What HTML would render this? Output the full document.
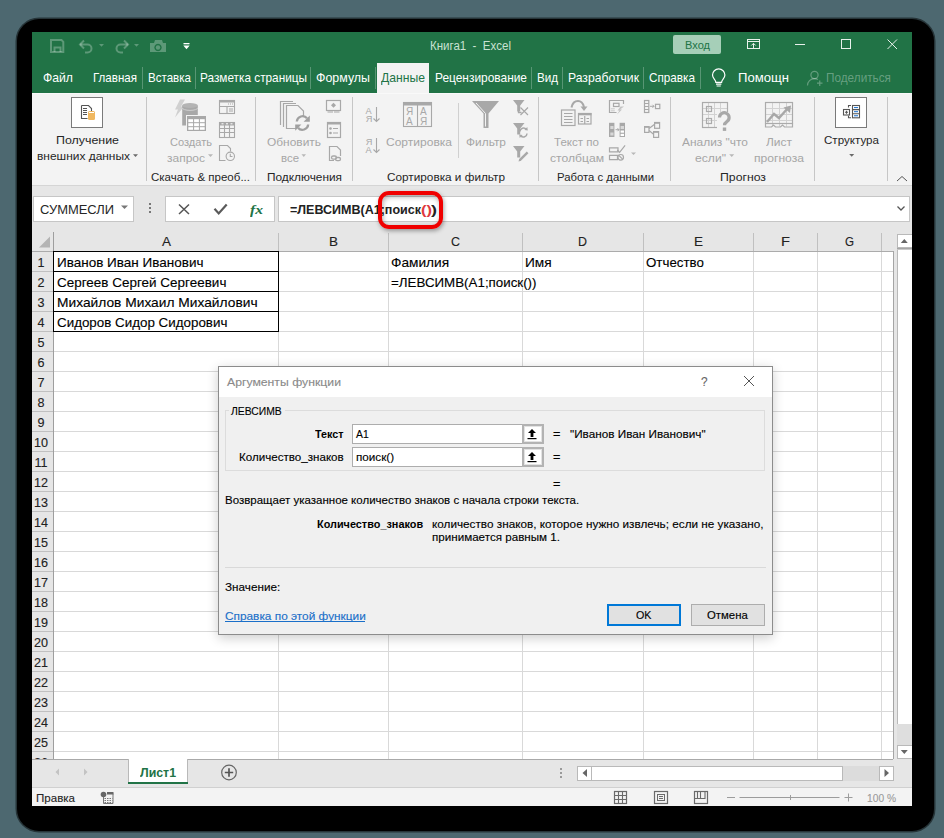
<!DOCTYPE html>
<html><head><meta charset="utf-8"><style>
html,body{margin:0;padding:0;width:944px;height:838px;overflow:hidden;background:#4d6870;font-family:"Liberation Sans",sans-serif}
</style></head><body>
<div style="position:absolute;left:17px;top:19px;width:917px;height:812px;background:#000;border-radius:22px;box-shadow:0 0 0 1.5px rgba(0,0,0,0.5)"></div>
<div style="position:absolute;left:32px;top:32px;width:880px;height:61px;background:#217346"></div>
<div style="position:absolute;left:32px;top:93px;width:880px;height:92px;background:#f3f3f3"></div>
<div style="position:absolute;left:32px;top:93px;width:880px;height:1px;background:#f9f9f9"></div>
<div style="position:absolute;left:32px;top:185px;width:880px;height:1px;background:#d5d5d5"></div>
<div style="position:absolute;left:32px;top:186px;width:880px;height:47px;background:#e6e6e6"></div>
<div style="position:absolute;left:32px;top:232px;width:880px;height:527px;background:#e6e6e6"></div>
<div style="position:absolute;left:32px;top:759px;width:880px;height:28px;background:#e6e6e6"></div>
<div style="position:absolute;left:32px;top:787px;width:880px;height:1px;background:#d0d0d0"></div>
<div style="position:absolute;left:32px;top:788px;width:880px;height:18px;background:#f3f3f3"></div>
<svg style="position:absolute;left:0;top:0" width="944" height="100">
<g fill="none" stroke="rgba(255,255,255,0.27)" stroke-width="2">
<path d="M51 40h10.5l1.8 1.8v10.2h-12.3z"/>
<path d="M54.5 52v-4.5h6v4.5"/>
<path d="M80 44.5h7.5a4 4 0 0 1 0 8h-2.5" />
<path d="M84 40.5l-4 4 4 4"/>
<path d="M128 44.5h-7.5a4 4 0 0 0 0 8h2.5" />
<path d="M124 40.5l4 4-4 4"/>
</g>
<g fill="rgba(255,255,255,0.27)">
<path d="M99 44h5l-2.5 2.7z"/>
<path d="M134 44h5l-2.5 2.7z"/>
<path d="M150 43h4l1-3h7l1 3h3v9h-16z M158 43.8a3.7 3.7 0 1 0 0.01 0z" fill-rule="evenodd"/><circle cx="158" cy="47.5" r="2.2"/>
</g>
<g fill="#fff">
<rect x="183.5" y="43" width="6" height="1.3"/>
<path d="M183.3 45.5h6.4l-3.2 3.7z"/>
</g>
</svg>
<span style="position:absolute;white-space:pre;left:429.50px;top:40.00px;font-family:'Liberation Sans', sans-serif;font-size:12px;font-weight:400;line-height:1;;color:#c9e2d2;transform:scaleX(0.9589);transform-origin:0 0">Книга1  -  Excel</span>
<div style="position:absolute;left:673px;top:35px;width:48px;height:19px;background:#a6cfb8;border-radius:2px"></div>
<span style="position:absolute;white-space:pre;left:684.50px;top:39.00px;font-family:'Liberation Sans', sans-serif;font-size:11.7px;font-weight:400;line-height:1;;color:#217346;transform:scaleX(0.9451);transform-origin:0 0">Вход</span>
<svg style="position:absolute;left:0;top:0" width="944" height="100">
<g fill="none" stroke="#e8f1eb" stroke-width="1">
<rect x="747.5" y="39.5" width="12" height="9"/>
<path d="M747.5 41.5h12"/>
<path d="M753.5 48v-4.5M751.3 45.5l2.2-2.2 2.2 2.2"/>
<path d="M795 44.5h10"/>
<rect x="841.5" y="39.5" width="9" height="9"/>
<path d="M887.5 39.5l9.5 9.5M897 39.5l-9.5 9.5"/>
</g></svg>
<span style="position:absolute;white-space:pre;left:42.50px;top:71.00px;font-family:'Liberation Sans', sans-serif;font-size:13.5px;font-weight:400;line-height:1;;color:#fff;transform:scaleX(0.9035);transform-origin:0 0">Файл</span>
<span style="position:absolute;white-space:pre;left:92.50px;top:71.00px;font-family:'Liberation Sans', sans-serif;font-size:13.5px;font-weight:400;line-height:1;;color:#fff;transform:scaleX(0.8562);transform-origin:0 0">Главная</span>
<span style="position:absolute;white-space:pre;left:147.50px;top:71.00px;font-family:'Liberation Sans', sans-serif;font-size:13.5px;font-weight:400;line-height:1;;color:#fff;transform:scaleX(0.8568);transform-origin:0 0">Вставка</span>
<span style="position:absolute;white-space:pre;left:199.50px;top:71.00px;font-family:'Liberation Sans', sans-serif;font-size:13.5px;font-weight:400;line-height:1;;color:#fff;transform:scaleX(0.8736);transform-origin:0 0">Разметка страницы</span>
<span style="position:absolute;white-space:pre;left:315.50px;top:71.00px;font-family:'Liberation Sans', sans-serif;font-size:13.5px;font-weight:400;line-height:1;;color:#fff;transform:scaleX(0.9191);transform-origin:0 0">Формулы</span>
<span style="position:absolute;white-space:pre;left:434.50px;top:71.00px;font-family:'Liberation Sans', sans-serif;font-size:13.5px;font-weight:400;line-height:1;;color:#fff;transform:scaleX(0.8825);transform-origin:0 0">Рецензирование</span>
<span style="position:absolute;white-space:pre;left:536.50px;top:71.00px;font-family:'Liberation Sans', sans-serif;font-size:13.5px;font-weight:400;line-height:1;;color:#fff;transform:scaleX(0.8593);transform-origin:0 0">Вид</span>
<span style="position:absolute;white-space:pre;left:567.50px;top:71.00px;font-family:'Liberation Sans', sans-serif;font-size:13.5px;font-weight:400;line-height:1;;color:#fff;transform:scaleX(0.9018);transform-origin:0 0">Разработчик</span>
<span style="position:absolute;white-space:pre;left:648.50px;top:71.00px;font-family:'Liberation Sans', sans-serif;font-size:13.5px;font-weight:400;line-height:1;;color:#fff;transform:scaleX(0.8684);transform-origin:0 0">Справка</span>
<span style="position:absolute;white-space:pre;left:737.50px;top:71.00px;font-family:'Liberation Sans', sans-serif;font-size:13.5px;font-weight:400;line-height:1;;color:#fff;transform:scaleX(0.9700);transform-origin:0 0">Помощн</span>
<div style="position:absolute;left:142px;top:67px;width:1px;height:22px;background:rgba(255,255,255,0.25)"></div>
<div style="position:absolute;left:195px;top:67px;width:1px;height:22px;background:rgba(255,255,255,0.25)"></div>
<div style="position:absolute;left:310px;top:67px;width:1px;height:22px;background:rgba(255,255,255,0.25)"></div>
<div style="position:absolute;left:375px;top:67px;width:1px;height:22px;background:rgba(255,255,255,0.25)"></div>
<div style="position:absolute;left:531px;top:67px;width:1px;height:22px;background:rgba(255,255,255,0.25)"></div>
<div style="position:absolute;left:562px;top:67px;width:1px;height:22px;background:rgba(255,255,255,0.25)"></div>
<div style="position:absolute;left:643px;top:67px;width:1px;height:22px;background:rgba(255,255,255,0.25)"></div>
<div style="position:absolute;left:700px;top:67px;width:1px;height:22px;background:rgba(255,255,255,0.25)"></div>
<div style="position:absolute;left:377px;top:63px;width:52px;height:30px;background:#f3f3f3"></div>
<span style="position:absolute;white-space:pre;left:380.50px;top:71.00px;font-family:'Liberation Sans', sans-serif;font-size:13.5px;font-weight:400;line-height:1;;color:#217346;transform:scaleX(0.9020);transform-origin:0 0">Данные</span>
<span style="position:absolute;white-space:pre;left:825.50px;top:71.00px;font-family:'Liberation Sans', sans-serif;font-size:13.5px;font-weight:400;line-height:1;;color:rgba(255,255,255,0.32);transform:scaleX(0.8719);transform-origin:0 0">Поделиться</span>
<svg style="position:absolute;left:0;top:0" width="944" height="100">
<g fill="none" stroke="#fff" stroke-width="1.2">
<path d="M715.8 82.3c0-2.6-3.3-4-3.3-7.2a6.2 6.2 0 0 1 12.4 0c0 3.2-3.3 4.6-3.3 7.2z"/>
<path d="M716 84.2h5.4M716.6 86h4.2"/>
</g>
<g fill="none" stroke="rgba(255,255,255,0.3)" stroke-width="1.2">
<circle cx="814.5" cy="75" r="3.6"/>
<path d="M807.5 85.5c0-4 3-6.8 7-6.8 1.3 0 2.4 0.3 3.4 0.8"/>
<path d="M817 83.2h5.5M819.75 80.5v5.5"/>
</g>
</svg>
<div style="position:absolute;left:146px;top:97px;width:1px;height:84px;background:#c6c6c6"></div>
<div style="position:absolute;left:255px;top:97px;width:1px;height:84px;background:#c6c6c6"></div>
<div style="position:absolute;left:352px;top:97px;width:1px;height:84px;background:#c6c6c6"></div>
<div style="position:absolute;left:538px;top:97px;width:1px;height:84px;background:#c6c6c6"></div>
<div style="position:absolute;left:670px;top:97px;width:1px;height:84px;background:#c6c6c6"></div>
<div style="position:absolute;left:814px;top:97px;width:1px;height:84px;background:#c6c6c6"></div>
<div style="position:absolute;left:887px;top:97px;width:1px;height:84px;background:#c6c6c6"></div>
<div style="position:absolute;left:458px;top:103px;width:1px;height:55px;background:#d0d0d0"></div>
<div style="position:absolute;left:71px;top:97px;width:32px;height:31px;background:#fff;border:1px solid #7a7a7a;box-sizing:border-box"></div>
<span style="position:absolute;white-space:pre;left:55.50px;top:135.00px;font-family:'Liberation Sans', sans-serif;font-size:11.8px;font-weight:400;line-height:1;;color:#262626;transform:scaleX(1.0511);transform-origin:0 0">Получение</span>
<span style="position:absolute;white-space:pre;left:36.50px;top:151.00px;font-family:'Liberation Sans', sans-serif;font-size:11.8px;font-weight:400;line-height:1;;color:#262626;transform:scaleX(1.0114);transform-origin:0 0">внешних данных</span>
<span style="position:absolute;white-space:pre;left:150.50px;top:172.00px;font-family:'Liberation Sans', sans-serif;font-size:11.8px;font-weight:400;line-height:1;;color:#262626;transform:scaleX(0.9770);transform-origin:0 0">Скачать & преоб...</span>
<span style="position:absolute;white-space:pre;left:169.50px;top:137.00px;font-family:'Liberation Sans', sans-serif;font-size:11.8px;font-weight:400;line-height:1;;color:#a6a6a6;transform:scaleX(0.9366);transform-origin:0 0">Создать</span>
<span style="position:absolute;white-space:pre;left:166.50px;top:153.00px;font-family:'Liberation Sans', sans-serif;font-size:11.8px;font-weight:400;line-height:1;;color:#a6a6a6;transform:scaleX(1.0163);transform-origin:0 0">запрос</span>
<span style="position:absolute;white-space:pre;left:266.50px;top:137.00px;font-family:'Liberation Sans', sans-serif;font-size:11.8px;font-weight:400;line-height:1;;color:#a6a6a6;transform:scaleX(1.0108);transform-origin:0 0">Обновить</span>
<span style="position:absolute;white-space:pre;left:280.50px;top:153.00px;font-family:'Liberation Sans', sans-serif;font-size:11.8px;font-weight:400;line-height:1;;color:#a6a6a6;transform:scaleX(0.9673);transform-origin:0 0">все</span>
<span style="position:absolute;white-space:pre;left:266.50px;top:172.00px;font-family:'Liberation Sans', sans-serif;font-size:11.8px;font-weight:400;line-height:1;;color:#262626;transform:scaleX(1.0048);transform-origin:0 0">Подключения</span>
<span style="position:absolute;white-space:pre;left:385.50px;top:137.00px;font-family:'Liberation Sans', sans-serif;font-size:11.8px;font-weight:400;line-height:1;;color:#a6a6a6;transform:scaleX(1.0193);transform-origin:0 0">Сортировка</span>
<span style="position:absolute;white-space:pre;left:465.50px;top:137.00px;font-family:'Liberation Sans', sans-serif;font-size:11.8px;font-weight:400;line-height:1;;color:#a6a6a6;transform:scaleX(1.0091);transform-origin:0 0">Фильтр</span>
<span style="position:absolute;white-space:pre;left:386.50px;top:172.00px;font-family:'Liberation Sans', sans-serif;font-size:11.8px;font-weight:400;line-height:1;;color:#262626;transform:scaleX(0.9978);transform-origin:0 0">Сортировка и фильтр</span>
<span style="position:absolute;white-space:pre;left:553.50px;top:137.00px;font-family:'Liberation Sans', sans-serif;font-size:11.8px;font-weight:400;line-height:1;;color:#a6a6a6;transform:scaleX(0.9796);transform-origin:0 0">Текст по</span>
<span style="position:absolute;white-space:pre;left:549.50px;top:153.00px;font-family:'Liberation Sans', sans-serif;font-size:11.8px;font-weight:400;line-height:1;;color:#a6a6a6;transform:scaleX(1.0277);transform-origin:0 0">столбцам</span>
<span style="position:absolute;white-space:pre;left:556.50px;top:172.00px;font-family:'Liberation Sans', sans-serif;font-size:11.8px;font-weight:400;line-height:1;;color:#262626;transform:scaleX(0.9600);transform-origin:0 0">Работа с данными</span>
<span style="position:absolute;white-space:pre;left:681.50px;top:137.00px;font-family:'Liberation Sans', sans-serif;font-size:11.8px;font-weight:400;line-height:1;;color:#a6a6a6;transform:scaleX(1.0110);transform-origin:0 0">Анализ "что</span>
<span style="position:absolute;white-space:pre;left:694.50px;top:153.00px;font-family:'Liberation Sans', sans-serif;font-size:11.8px;font-weight:400;line-height:1;;color:#a6a6a6;transform:scaleX(1.0290);transform-origin:0 0">если"</span>
<span style="position:absolute;white-space:pre;left:765.50px;top:137.00px;font-family:'Liberation Sans', sans-serif;font-size:11.8px;font-weight:400;line-height:1;;color:#a6a6a6;transform:scaleX(1.0140);transform-origin:0 0">Лист</span>
<span style="position:absolute;white-space:pre;left:753.50px;top:153.00px;font-family:'Liberation Sans', sans-serif;font-size:11.8px;font-weight:400;line-height:1;;color:#a6a6a6;transform:scaleX(1.0260);transform-origin:0 0">прогноза</span>
<span style="position:absolute;white-space:pre;left:719.50px;top:172.00px;font-family:'Liberation Sans', sans-serif;font-size:11.8px;font-weight:400;line-height:1;;color:#262626;transform:scaleX(1.0392);transform-origin:0 0">Прогноз</span>
<div style="position:absolute;left:835px;top:97px;width:32px;height:31px;background:#fff;border:1px solid #7a7a7a;box-sizing:border-box"></div>
<span style="position:absolute;white-space:pre;left:823.50px;top:135.00px;font-family:'Liberation Sans', sans-serif;font-size:11.8px;font-weight:400;line-height:1;;color:#262626;transform:scaleX(0.9827);transform-origin:0 0">Структура</span>
<svg style="position:absolute;left:0;top:0" width="944" height="200">
<!-- dropdown arrows -->
<g fill="#6a6a6a"><path d="M133 154.3h5l-2.5 2.6z"/><path d="M849.2 154h5l-2.5 2.8z"/></g>
<g fill="#b8b8b8"><path d="M208 154.3h5l-2.5 2.6z"/><path d="M301.5 154.3h4.5l-2.25 2.6z"/><path d="M729.2 154.3h5l-2.5 2.6z"/><path d="M631 152.5h5l-2.5 2.6z"/></g>
<!-- get external data icon -->
<g fill="none" stroke="#555" stroke-width="1.1"><path d="M81.5 105.5h7l3 3v3M81.5 105.5v13h6"/><path d="M83 108.5h4M83 110.5h4M83 112.5h4M83 114.5h4"/></g>
<g fill="#f0b860"><rect x="88" y="111" width="7" height="9" rx="1.5"/></g>
<g fill="#fff"><rect x="89" y="112" width="5" height="1"/></g>
<!-- create query -->
<path d="M180 99.5h5l-4 7h3l-9 11 3-8h-3z" fill="#d0d0d0"/>
<rect x="182.2" y="105.5" width="15.6" height="20" fill="#a8a8a8"/>
<ellipse cx="190" cy="105.5" rx="7.8" ry="2.6" fill="#b4b4b4"/>
<path d="M182.2 107.8a7.8 2.6 0 0 0 15.6 0" fill="none" stroke="#d8d8d8" stroke-width="0.8"/>
<rect x="186" y="115" width="21" height="17" fill="#f3f3f3"/>
<rect x="187" y="116" width="19" height="15" fill="#a8a8a8"/>
<g fill="#fff"><rect x="188.3" y="119.2" width="4.8" height="3"/><rect x="194.1" y="119.2" width="4.8" height="3"/><rect x="199.9" y="119.2" width="4.8" height="3"/>
<rect x="188.3" y="123.2" width="4.8" height="3"/><rect x="194.1" y="123.2" width="4.8" height="3"/><rect x="199.9" y="123.2" width="4.8" height="3"/>
<rect x="188.3" y="127.2" width="4.8" height="2.6"/><rect x="194.1" y="127.2" width="4.8" height="2.6"/><rect x="199.9" y="127.2" width="4.8" height="2.6"/></g>
<g fill="none" stroke="#a8a8a8" stroke-width="1.1">
<rect x="219.5" y="100.5" width="15" height="13"/><path d="M219.5 106.5h15M227 106.5v7M229 109h4M229 111h4"/>
<rect x="219.5" y="122.5" width="15" height="15"/><path d="M219.5 128.5h15M219.5 132.5h15M224.5 125v12.5M229.5 125v12.5"/>
<path d="M225.5 160.5h-6v-15h8l3 3v3"/><circle cx="230.3" cy="156.3" r="4.2"/><path d="M230.3 153.8v2.7h2.2"/>
</g>
<g fill="#a8a8a8"><rect x="219.5" y="100" width="15.5" height="2.5"/><rect x="219.5" y="122" width="15.5" height="3.5"/>
<rect x="228" y="103.5" width="1" height="1"/><rect x="230" y="103.5" width="1" height="1"/><rect x="232" y="103.5" width="1" height="1"/></g>
<g fill="#fff"><rect x="221.5" y="123.3" width="2" height="1"/><rect x="226" y="123.3" width="2" height="1"/><rect x="230.5" y="123.3" width="2" height="1"/></g>
<!-- refresh all -->
<g fill="none" stroke="#a8a8a8" stroke-width="1.2">
<path d="M280.5 125v-23.5h12.5"/><path d="M283.5 127v-23.5h12.5"/>
<path d="M296 128.5h-9.5v-23h11.5l5.5 5.5v5"/>
<rect x="326.5" y="100.5" width="14" height="10"/><path d="M327.5 112h5.5M334 112h5.5"/>
<rect x="327.5" y="122.5" width="13" height="15"/>
<path d="M334 160.5h-4.5v-14h7.5l3.5 3.5v6"/>
<rect x="331.5" y="156" width="5" height="3.2" rx="1.6" stroke-width="1.3"/><rect x="335.5" y="157.5" width="5" height="3.2" rx="1.6" stroke-width="1.3"/>
</g>
<path d="M290 125.5h7.5v-9" fill="#f3f3f3" stroke="none"/>
<g fill="none" stroke="#a0a0a0" stroke-width="2.3">
<path d="M296.8 121.5a5.8 5.8 0 0 1 10.2-3.2"/><path d="M308.2 124.5a5.8 5.8 0 0 1-10.2 3.2"/>
</g>
<g fill="#a0a0a0"><path d="M309.8 115.5v6.2h-6.2z"/><path d="M295.2 130.7v-6.2h6.2z"/></g>
<g fill="#a8a8a8"><rect x="327.5" y="122" width="13.5" height="2.5"/>
<path d="M333.5 102.8l2.5 2.5-2.5 2.5-2.5-2.5z"/><circle cx="330.5" cy="128.5" r="1.3"/><rect x="333" y="128" width="5" height="1"/><circle cx="330.5" cy="133" r="1.3"/><rect x="333" y="132.5" width="5" height="1"/></g>
<!-- sort -->
<g font-family="Liberation Sans" font-size="9.2" fill="#a8a8a8">
<text x="365.5" y="113.8">A</text><text x="365.8" y="122.3">Я</text>
<text x="365.8" y="144.5">Я</text><text x="365.5" y="153">A</text>
</g>
<g fill="none" stroke="#a8a8a8" stroke-width="1.1"><path d="M376.5 107v14.5M373.5 118.5l3 3 3-3M376.5 138v14.5M373.5 149.5l3 3 3-3"/>
<rect x="403.5" y="102.5" width="28" height="24"/><path d="M417.5 104v22.5"/></g>
<rect x="403" y="102" width="29" height="3.5" fill="#a8a8a8"/>
<g font-family="Liberation Sans" font-size="10" fill="#a8a8a8">
<text x="406" y="115">Я</text><text x="420" y="115">A</text><text x="406" y="125">A</text><text x="420" y="125">Я</text>
</g>
<!-- filter -->
<path d="M472 101h27l-10.5 12.5v14.5h-5v-14.5z" fill="#a8a8a8"/>
<path d="M476 103l9.5 10.5v13" stroke="#f3f3f3" stroke-width="1" fill="none"/>
<g fill="#a8a8a8"><path d="M513 100h11.5l-4.3 5.5v6h-3v-6z"/><path d="M513 123h11.5l-4.3 5.5v6h-3v-6z"/><path d="M513 146h11.5l-4.3 5.5v6h-3v-6z"/></g>
<g fill="none" stroke="#a8a8a8" stroke-width="1.3"><path d="M518.5 110.5v2h3"/><path d="M520.5 107.5l7.5 7.5M528 107.5l-7.5 7.5" stroke-width="1.2"/>
<path d="M520 131.5a3.6 3.6 0 0 1 6.3-2.3M527 133.5a3.6 3.6 0 0 1-6.3 2.3" stroke-width="1.5"/>
<path d="M519.8 160.2l7.8-7.8" stroke-width="2.4"/></g>
<g fill="#a8a8a8"><path d="M527.3 127l0.5 3.5-3.5-0.5z"/><path d="M519.7 138l-0.5-3.5 3.5 0.5z"/><path d="M518.5 161.5l0.8-2.8 2 2z"/></g>
<!-- text to columns -->
<g fill="none" stroke="#a8a8a8" stroke-width="1.2">
<rect x="561.5" y="110" width="13.5" height="15.5"/><path d="M564 113.5h8.5M564 116.5h8.5M564 119.5h8.5M564 122.5h8.5"/>
<rect x="578.5" y="113.5" width="12.5" height="10.5"/><path d="M584.75 116v8M580.5 118.5h2.5M586.5 118.5h2.5M580.5 121.5h2.5M586.5 121.5h2.5"/>
<path d="M571.5 107.5c1-5 4-6.5 6.5-6.5s5 2 6 6" stroke-width="2"/>
</g>
<g fill="none" stroke="#a8a8a8" stroke-width="1.2">
<path d="M623.5 104v-3.5h-14v12h7"/>
<rect x="613.5" y="103.3" width="5.5" height="3.2"/>
<path d="M609.5 147.9h8.5v4h-8.5z"/><path d="M609.5 155.4h8v4.2h-8z"/><path d="M617.3 150l2.3 2.3 5.5-7"/><circle cx="620.7" cy="157.3" r="2.8"/><path d="M618.8 155.4l3.8 3.8"/>
<rect x="644.5" y="100.5" width="4.3" height="12"/><path d="M644.5 103.5h4.3M644.5 106.5h4.3M644.5 109.5h4.3"/><rect x="655.5" y="104.3" width="4.3" height="4.3"/>
<rect x="644.6" y="126.6" width="4.4" height="5.8"/><rect x="654.6" y="122.5" width="5" height="5.8"/><rect x="653.6" y="131.6" width="5" height="5.8"/><path d="M649 128.5l5.3-4M649 130.5l4.3 3.5"/>
</g>
<g fill="#a8a8a8">
<path d="M624 106.5h-3.5l-3 4h2l-2.5 4 5-5h-2z" fill="#c4c4c4"/>
<rect x="609" y="122.8" width="5.4" height="14.2"/><rect x="619.6" y="122.8" width="5.4" height="14.2"/>
<path d="M650 106.3h4M652.5 104.8l1.5 1.5-1.5 1.5" stroke="#a8a8a8" stroke-width="1" fill="none"/>
<path d="M615.5 129.7h3.5M617.5 128.2l1.5 1.5-1.5 1.5" stroke="#a8a8a8" stroke-width="1" fill="none"/>
<rect x="644" y="126" width="5.4" height="1.8"/><rect x="654" y="122" width="6" height="1.8"/><rect x="653" y="131" width="6" height="1.8"/>
</g>
<g fill="#d8d8d8"><rect x="610.3" y="126" width="3.2" height="3"/><rect x="610.3" y="132.5" width="3.2" height="3"/><rect x="620.6" y="126" width="3.4" height="3"/></g>
<g fill="#fff"><rect x="620.6" y="130.5" width="3.4" height="2.2"/><rect x="620.6" y="133.8" width="3.4" height="2.2"/></g>
<g fill="#c8c8c8"><rect x="610.8" y="108.3" width="4" height="1"/><rect x="610.8" y="110.3" width="4" height="1"/></g>
<path d="M584 111l3.5-4.5h-7z" fill="#a8a8a8"/><rect x="578" y="113" width="13.5" height="2.3" fill="#a8a8a8"/>
<!-- what-if -->
<g fill="none" stroke="#d2d2d2" stroke-width="1">
<path d="M702.5 108.5h25M702.5 114.5h25M702.5 120.5h25M708.5 102.5v25M714.5 102.5v25M720.5 102.5v25"/>
<path d="M765.5 108.5h27M765.5 114.5h27M765.5 120.5h27M772.5 102.5v24M779.5 102.5v24M786.5 102.5v24"/>
</g>
<g fill="none" stroke="#ababab" stroke-width="1.2">
<rect x="702.5" y="102.5" width="25" height="25"/><rect x="765.5" y="102.5" width="27" height="21"/>
<rect x="706.5" y="106.5" width="5" height="5"/><rect x="706.5" y="118.5" width="5" height="5"/>
<path d="M765.5 123.5v3.5h6l2-2 2 2h5l2-2 2 2h8v-3.5"/>
</g>
<path d="M717 112h14v20h-14z" fill="#f3f3f3"/>
<path d="M719.5 117.5a4.8 4.8 0 1 1 7.5 4c-1.5 1-2.5 1.6-2.5 3.8" fill="none" stroke="#a8a8a8" stroke-width="3.2"/>
<rect x="722.8" y="127.5" width="3.4" height="3.4" fill="#a8a8a8"/>
<path d="M767 122l7-8 5 4 9-10" fill="none" stroke="#a8a8a8" stroke-width="2.4"/>
<path d="M791 105.5l-1 7.5-6.5-5.5z" fill="#a8a8a8"/>
<!-- structure -->
<g fill="none" stroke="#555" stroke-width="1.1">
<rect x="843.5" y="109.5" width="6" height="5.5"/><path d="M846.5 110.8v3M845 112.25h3"/>
<path d="M851 105.5h-2.5v2M851 117.8h-2.5v-2"/>
<rect x="852.5" y="105.5" width="7" height="12.3"/><path d="M852.5 109.6h7M852.5 113.7h7"/>
</g>
<g fill="#2b7cd3"><rect x="854" y="107" width="4" height="1.1"/><rect x="854" y="111.1" width="4" height="1.1"/><rect x="854" y="115.2" width="4" height="1.1"/></g>
<path d="M897 181l5-4.5 5 4.5" fill="none" stroke="#555" stroke-width="1"/>
</svg>
<div style="position:absolute;left:33px;top:196px;width:101px;height:26px;background:#fff;border:1px solid #c6c6c6;box-sizing:border-box"></div>
<span style="position:absolute;white-space:pre;left:39.50px;top:204.00px;font-family:'Liberation Sans', sans-serif;font-size:12px;font-weight:400;line-height:1;;color:#262626;transform:scaleX(1.0778);transform-origin:0 0">СУММЕСЛИ</span>
<div style="position:absolute;left:165px;top:196px;width:110px;height:26px;background:#fff;border:1px solid #c6c6c6;box-sizing:border-box"></div>
<div style="position:absolute;left:278px;top:196px;width:632px;height:26px;background:#fff;border:1px solid #c6c6c6;box-sizing:border-box"></div>
<svg style="position:absolute;left:0;top:0" width="944" height="240">
<g fill="#777"><path d="M121 205.5h7l-3.5 3.5z"/><rect x="149" y="203" width="2" height="2"/><rect x="149" y="207" width="2" height="2"/><rect x="149" y="211" width="2" height="2"/></g>
<g fill="none" stroke="#555" stroke-width="1.5"><path d="M179 204.5l10 9.5M189 204.5l-10 9.5"/></g><path d="M214.5 208.8l4.2 4.6 8-9" fill="none" stroke="#5a5a5a" stroke-width="2.2"/>
<path d="M897.5 206.5l3.5 3.5 3.5-3.5" fill="none" stroke="#555" stroke-width="1.3"/>
</svg>
<span style="position:absolute;white-space:pre;left:249.50px;top:203.00px;font-family:'Liberation Sans', sans-serif;font-size:13px;font-weight:700;line-height:1;font-family:'Liberation Serif',serif;font-style:italic;color:#217346;transform:scaleX(1.1988);transform-origin:0 0">fx</span>
<span style="position:absolute;white-space:pre;left:289.50px;top:204.00px;font-family:'Liberation Sans', sans-serif;font-size:12.5px;font-weight:700;line-height:1;;color:#222;transform:scaleX(1.0016);transform-origin:0 0">=ЛЕВСИМВ(А1;поиск</span>
<span style="position:absolute;white-space:pre;left:420.50px;top:204.00px;font-family:'Liberation Sans', sans-serif;font-size:12.5px;font-weight:700;line-height:1;;color:#e0393e;transform:scaleX(1.3208);transform-origin:0 0">()</span>
<span style="position:absolute;white-space:pre;left:430.50px;top:204.00px;font-family:'Liberation Sans', sans-serif;font-size:12.5px;font-weight:700;line-height:1;;color:#222;transform:scaleX(1.4382);transform-origin:0 0">)</span>
<div style="position:absolute;left:53px;top:252px;width:840px;height:507px;background:#fff"></div>
<div style="position:absolute;left:32px;top:251px;width:861px;height:1px;background:#ababab"></div>
<div style="position:absolute;left:53px;top:232px;width:1px;height:527px;background:#9e9e9e"></div>
<div style="position:absolute;left:278px;top:233px;width:1px;height:18px;background:#c0c0c0"></div>
<div style="position:absolute;left:278px;top:252px;width:1px;height:507px;background:#d9d9d9"></div>
<div style="position:absolute;left:388px;top:233px;width:1px;height:18px;background:#c0c0c0"></div>
<div style="position:absolute;left:388px;top:252px;width:1px;height:507px;background:#d9d9d9"></div>
<div style="position:absolute;left:522px;top:233px;width:1px;height:18px;background:#c0c0c0"></div>
<div style="position:absolute;left:522px;top:252px;width:1px;height:507px;background:#d9d9d9"></div>
<div style="position:absolute;left:643px;top:233px;width:1px;height:18px;background:#c0c0c0"></div>
<div style="position:absolute;left:643px;top:252px;width:1px;height:507px;background:#d9d9d9"></div>
<div style="position:absolute;left:753px;top:233px;width:1px;height:18px;background:#c0c0c0"></div>
<div style="position:absolute;left:753px;top:252px;width:1px;height:507px;background:#d9d9d9"></div>
<div style="position:absolute;left:817px;top:233px;width:1px;height:18px;background:#c0c0c0"></div>
<div style="position:absolute;left:817px;top:252px;width:1px;height:507px;background:#d9d9d9"></div>
<div style="position:absolute;left:881px;top:233px;width:1px;height:18px;background:#c0c0c0"></div>
<div style="position:absolute;left:881px;top:252px;width:1px;height:507px;background:#d9d9d9"></div>
<div style="position:absolute;left:32px;top:271px;width:21px;height:1px;background:#c0c0c0"></div>
<div style="position:absolute;left:54px;top:271px;width:839px;height:1px;background:#d9d9d9"></div>
<div style="position:absolute;left:32px;top:291px;width:21px;height:1px;background:#c0c0c0"></div>
<div style="position:absolute;left:54px;top:291px;width:839px;height:1px;background:#d9d9d9"></div>
<div style="position:absolute;left:32px;top:311px;width:21px;height:1px;background:#c0c0c0"></div>
<div style="position:absolute;left:54px;top:311px;width:839px;height:1px;background:#d9d9d9"></div>
<div style="position:absolute;left:32px;top:331px;width:21px;height:1px;background:#c0c0c0"></div>
<div style="position:absolute;left:54px;top:331px;width:839px;height:1px;background:#d9d9d9"></div>
<div style="position:absolute;left:32px;top:351px;width:21px;height:1px;background:#c0c0c0"></div>
<div style="position:absolute;left:54px;top:351px;width:839px;height:1px;background:#d9d9d9"></div>
<div style="position:absolute;left:32px;top:371px;width:21px;height:1px;background:#c0c0c0"></div>
<div style="position:absolute;left:54px;top:371px;width:839px;height:1px;background:#d9d9d9"></div>
<div style="position:absolute;left:32px;top:391px;width:21px;height:1px;background:#c0c0c0"></div>
<div style="position:absolute;left:54px;top:391px;width:839px;height:1px;background:#d9d9d9"></div>
<div style="position:absolute;left:32px;top:411px;width:21px;height:1px;background:#c0c0c0"></div>
<div style="position:absolute;left:54px;top:411px;width:839px;height:1px;background:#d9d9d9"></div>
<div style="position:absolute;left:32px;top:431px;width:21px;height:1px;background:#c0c0c0"></div>
<div style="position:absolute;left:54px;top:431px;width:839px;height:1px;background:#d9d9d9"></div>
<div style="position:absolute;left:32px;top:451px;width:21px;height:1px;background:#c0c0c0"></div>
<div style="position:absolute;left:54px;top:451px;width:839px;height:1px;background:#d9d9d9"></div>
<div style="position:absolute;left:32px;top:471px;width:21px;height:1px;background:#c0c0c0"></div>
<div style="position:absolute;left:54px;top:471px;width:839px;height:1px;background:#d9d9d9"></div>
<div style="position:absolute;left:32px;top:491px;width:21px;height:1px;background:#c0c0c0"></div>
<div style="position:absolute;left:54px;top:491px;width:839px;height:1px;background:#d9d9d9"></div>
<div style="position:absolute;left:32px;top:511px;width:21px;height:1px;background:#c0c0c0"></div>
<div style="position:absolute;left:54px;top:511px;width:839px;height:1px;background:#d9d9d9"></div>
<div style="position:absolute;left:32px;top:531px;width:21px;height:1px;background:#c0c0c0"></div>
<div style="position:absolute;left:54px;top:531px;width:839px;height:1px;background:#d9d9d9"></div>
<div style="position:absolute;left:32px;top:551px;width:21px;height:1px;background:#c0c0c0"></div>
<div style="position:absolute;left:54px;top:551px;width:839px;height:1px;background:#d9d9d9"></div>
<div style="position:absolute;left:32px;top:571px;width:21px;height:1px;background:#c0c0c0"></div>
<div style="position:absolute;left:54px;top:571px;width:839px;height:1px;background:#d9d9d9"></div>
<div style="position:absolute;left:32px;top:591px;width:21px;height:1px;background:#c0c0c0"></div>
<div style="position:absolute;left:54px;top:591px;width:839px;height:1px;background:#d9d9d9"></div>
<div style="position:absolute;left:32px;top:611px;width:21px;height:1px;background:#c0c0c0"></div>
<div style="position:absolute;left:54px;top:611px;width:839px;height:1px;background:#d9d9d9"></div>
<div style="position:absolute;left:32px;top:631px;width:21px;height:1px;background:#c0c0c0"></div>
<div style="position:absolute;left:54px;top:631px;width:839px;height:1px;background:#d9d9d9"></div>
<div style="position:absolute;left:32px;top:651px;width:21px;height:1px;background:#c0c0c0"></div>
<div style="position:absolute;left:54px;top:651px;width:839px;height:1px;background:#d9d9d9"></div>
<div style="position:absolute;left:32px;top:671px;width:21px;height:1px;background:#c0c0c0"></div>
<div style="position:absolute;left:54px;top:671px;width:839px;height:1px;background:#d9d9d9"></div>
<div style="position:absolute;left:32px;top:691px;width:21px;height:1px;background:#c0c0c0"></div>
<div style="position:absolute;left:54px;top:691px;width:839px;height:1px;background:#d9d9d9"></div>
<div style="position:absolute;left:32px;top:711px;width:21px;height:1px;background:#c0c0c0"></div>
<div style="position:absolute;left:54px;top:711px;width:839px;height:1px;background:#d9d9d9"></div>
<div style="position:absolute;left:32px;top:731px;width:21px;height:1px;background:#c0c0c0"></div>
<div style="position:absolute;left:54px;top:731px;width:839px;height:1px;background:#d9d9d9"></div>
<div style="position:absolute;left:32px;top:751px;width:21px;height:1px;background:#c0c0c0"></div>
<div style="position:absolute;left:54px;top:751px;width:839px;height:1px;background:#d9d9d9"></div>
<div style="position:absolute;left:893px;top:251px;width:1px;height:508px;background:#a5a5a5"></div>
<svg style="position:absolute;left:0;top:0" width="100" height="260"><path d="M39 247.5h11v-11z" fill="#b4b4b4"/></svg>
<span style="position:absolute;white-space:pre;left:161.50px;top:236.00px;font-family:'Liberation Sans', sans-serif;font-size:12.6px;font-weight:400;line-height:1;-webkit-text-stroke:0.12px currentColor;;color:#222;transform:scaleX(1.0706);transform-origin:0 0">A</span>
<span style="position:absolute;white-space:pre;left:328.50px;top:236.00px;font-family:'Liberation Sans', sans-serif;font-size:12.6px;font-weight:400;line-height:1;-webkit-text-stroke:0.12px currentColor;;color:#222;transform:scaleX(1.0706);transform-origin:0 0">B</span>
<span style="position:absolute;white-space:pre;left:451.00px;top:236.00px;font-family:'Liberation Sans', sans-serif;font-size:12.6px;font-weight:400;line-height:1;-webkit-text-stroke:0.12px currentColor;;color:#222;transform:scaleX(0.9880);transform-origin:0 0">C</span>
<span style="position:absolute;white-space:pre;left:578.00px;top:236.00px;font-family:'Liberation Sans', sans-serif;font-size:12.6px;font-weight:400;line-height:1;-webkit-text-stroke:0.12px currentColor;;color:#222;transform:scaleX(0.9880);transform-origin:0 0">D</span>
<span style="position:absolute;white-space:pre;left:693.50px;top:236.00px;font-family:'Liberation Sans', sans-serif;font-size:12.6px;font-weight:400;line-height:1;-webkit-text-stroke:0.12px currentColor;;color:#222;transform:scaleX(1.0706);transform-origin:0 0">E</span>
<span style="position:absolute;white-space:pre;left:780.50px;top:236.00px;font-family:'Liberation Sans', sans-serif;font-size:12.6px;font-weight:400;line-height:1;-webkit-text-stroke:0.12px currentColor;;color:#222;transform:scaleX(1.1684);transform-origin:0 0">F</span>
<span style="position:absolute;white-space:pre;left:845.00px;top:236.00px;font-family:'Liberation Sans', sans-serif;font-size:12.6px;font-weight:400;line-height:1;-webkit-text-stroke:0.12px currentColor;;color:#222;transform:scaleX(0.9187);transform-origin:0 0">G</span>
<span style="position:absolute;white-space:pre;left:37.49px;top:257.00px;font-family:'Liberation Sans', sans-serif;font-size:12.6px;font-weight:400;line-height:1;-webkit-text-stroke:0.12px currentColor;;color:#222;transform:scaleX(1.0000);transform-origin:0 0">1</span>
<span style="position:absolute;white-space:pre;left:37.49px;top:277.00px;font-family:'Liberation Sans', sans-serif;font-size:12.6px;font-weight:400;line-height:1;-webkit-text-stroke:0.12px currentColor;;color:#222;transform:scaleX(1.0000);transform-origin:0 0">2</span>
<span style="position:absolute;white-space:pre;left:37.49px;top:297.00px;font-family:'Liberation Sans', sans-serif;font-size:12.6px;font-weight:400;line-height:1;-webkit-text-stroke:0.12px currentColor;;color:#222;transform:scaleX(1.0000);transform-origin:0 0">3</span>
<span style="position:absolute;white-space:pre;left:37.49px;top:317.00px;font-family:'Liberation Sans', sans-serif;font-size:12.6px;font-weight:400;line-height:1;-webkit-text-stroke:0.12px currentColor;;color:#222;transform:scaleX(1.0000);transform-origin:0 0">4</span>
<span style="position:absolute;white-space:pre;left:37.49px;top:337.00px;font-family:'Liberation Sans', sans-serif;font-size:12.6px;font-weight:400;line-height:1;-webkit-text-stroke:0.12px currentColor;;color:#222;transform:scaleX(1.0000);transform-origin:0 0">5</span>
<span style="position:absolute;white-space:pre;left:37.49px;top:357.00px;font-family:'Liberation Sans', sans-serif;font-size:12.6px;font-weight:400;line-height:1;-webkit-text-stroke:0.12px currentColor;;color:#222;transform:scaleX(1.0000);transform-origin:0 0">6</span>
<span style="position:absolute;white-space:pre;left:37.49px;top:377.00px;font-family:'Liberation Sans', sans-serif;font-size:12.6px;font-weight:400;line-height:1;-webkit-text-stroke:0.12px currentColor;;color:#222;transform:scaleX(1.0000);transform-origin:0 0">7</span>
<span style="position:absolute;white-space:pre;left:37.49px;top:397.00px;font-family:'Liberation Sans', sans-serif;font-size:12.6px;font-weight:400;line-height:1;-webkit-text-stroke:0.12px currentColor;;color:#222;transform:scaleX(1.0000);transform-origin:0 0">8</span>
<span style="position:absolute;white-space:pre;left:37.49px;top:417.00px;font-family:'Liberation Sans', sans-serif;font-size:12.6px;font-weight:400;line-height:1;-webkit-text-stroke:0.12px currentColor;;color:#222;transform:scaleX(1.0000);transform-origin:0 0">9</span>
<span style="position:absolute;white-space:pre;left:33.99px;top:437.00px;font-family:'Liberation Sans', sans-serif;font-size:12.6px;font-weight:400;line-height:1;-webkit-text-stroke:0.12px currentColor;;color:#222;transform:scaleX(1.0000);transform-origin:0 0">10</span>
<span style="position:absolute;white-space:pre;left:34.46px;top:457.00px;font-family:'Liberation Sans', sans-serif;font-size:12.6px;font-weight:400;line-height:1;-webkit-text-stroke:0.12px currentColor;;color:#222;transform:scaleX(1.0000);transform-origin:0 0">11</span>
<span style="position:absolute;white-space:pre;left:33.99px;top:477.00px;font-family:'Liberation Sans', sans-serif;font-size:12.6px;font-weight:400;line-height:1;-webkit-text-stroke:0.12px currentColor;;color:#222;transform:scaleX(1.0000);transform-origin:0 0">12</span>
<span style="position:absolute;white-space:pre;left:33.99px;top:497.00px;font-family:'Liberation Sans', sans-serif;font-size:12.6px;font-weight:400;line-height:1;-webkit-text-stroke:0.12px currentColor;;color:#222;transform:scaleX(1.0000);transform-origin:0 0">13</span>
<span style="position:absolute;white-space:pre;left:33.99px;top:517.00px;font-family:'Liberation Sans', sans-serif;font-size:12.6px;font-weight:400;line-height:1;-webkit-text-stroke:0.12px currentColor;;color:#222;transform:scaleX(1.0000);transform-origin:0 0">14</span>
<span style="position:absolute;white-space:pre;left:33.99px;top:537.00px;font-family:'Liberation Sans', sans-serif;font-size:12.6px;font-weight:400;line-height:1;-webkit-text-stroke:0.12px currentColor;;color:#222;transform:scaleX(1.0000);transform-origin:0 0">15</span>
<span style="position:absolute;white-space:pre;left:33.99px;top:557.00px;font-family:'Liberation Sans', sans-serif;font-size:12.6px;font-weight:400;line-height:1;-webkit-text-stroke:0.12px currentColor;;color:#222;transform:scaleX(1.0000);transform-origin:0 0">16</span>
<span style="position:absolute;white-space:pre;left:33.99px;top:577.00px;font-family:'Liberation Sans', sans-serif;font-size:12.6px;font-weight:400;line-height:1;-webkit-text-stroke:0.12px currentColor;;color:#222;transform:scaleX(1.0000);transform-origin:0 0">17</span>
<span style="position:absolute;white-space:pre;left:33.99px;top:597.00px;font-family:'Liberation Sans', sans-serif;font-size:12.6px;font-weight:400;line-height:1;-webkit-text-stroke:0.12px currentColor;;color:#222;transform:scaleX(1.0000);transform-origin:0 0">18</span>
<span style="position:absolute;white-space:pre;left:33.99px;top:617.00px;font-family:'Liberation Sans', sans-serif;font-size:12.6px;font-weight:400;line-height:1;-webkit-text-stroke:0.12px currentColor;;color:#222;transform:scaleX(1.0000);transform-origin:0 0">19</span>
<span style="position:absolute;white-space:pre;left:33.99px;top:637.00px;font-family:'Liberation Sans', sans-serif;font-size:12.6px;font-weight:400;line-height:1;-webkit-text-stroke:0.12px currentColor;;color:#222;transform:scaleX(1.0000);transform-origin:0 0">20</span>
<span style="position:absolute;white-space:pre;left:33.99px;top:657.00px;font-family:'Liberation Sans', sans-serif;font-size:12.6px;font-weight:400;line-height:1;-webkit-text-stroke:0.12px currentColor;;color:#222;transform:scaleX(1.0000);transform-origin:0 0">21</span>
<span style="position:absolute;white-space:pre;left:33.99px;top:677.00px;font-family:'Liberation Sans', sans-serif;font-size:12.6px;font-weight:400;line-height:1;-webkit-text-stroke:0.12px currentColor;;color:#222;transform:scaleX(1.0000);transform-origin:0 0">22</span>
<span style="position:absolute;white-space:pre;left:33.99px;top:697.00px;font-family:'Liberation Sans', sans-serif;font-size:12.6px;font-weight:400;line-height:1;-webkit-text-stroke:0.12px currentColor;;color:#222;transform:scaleX(1.0000);transform-origin:0 0">23</span>
<span style="position:absolute;white-space:pre;left:33.99px;top:717.00px;font-family:'Liberation Sans', sans-serif;font-size:12.6px;font-weight:400;line-height:1;-webkit-text-stroke:0.12px currentColor;;color:#222;transform:scaleX(1.0000);transform-origin:0 0">24</span>
<span style="position:absolute;white-space:pre;left:33.99px;top:737.00px;font-family:'Liberation Sans', sans-serif;font-size:12.6px;font-weight:400;line-height:1;-webkit-text-stroke:0.12px currentColor;;color:#222;transform:scaleX(1.0000);transform-origin:0 0">25</span>
<span style="position:absolute;white-space:pre;left:33.99px;top:757.00px;font-family:'Liberation Sans', sans-serif;font-size:12.6px;font-weight:400;line-height:1;-webkit-text-stroke:0.12px currentColor;;color:#222;transform:scaleX(1.0000);transform-origin:0 0">26</span>
<div style="position:absolute;left:53px;top:251px;width:226px;height:81px;border:1px solid #000;box-sizing:border-box"></div>
<div style="position:absolute;left:53px;top:271px;width:226px;height:1px;background:#000"></div>
<div style="position:absolute;left:53px;top:291px;width:226px;height:1px;background:#000"></div>
<div style="position:absolute;left:53px;top:311px;width:226px;height:1px;background:#000"></div>
<span style="position:absolute;white-space:pre;left:56.50px;top:257.00px;font-family:'Liberation Sans', sans-serif;font-size:12.7px;font-weight:400;line-height:1;-webkit-text-stroke:0.12px currentColor;;color:#000;transform:scaleX(1.0640);transform-origin:0 0">Иванов Иван Иванович</span>
<span style="position:absolute;white-space:pre;left:56.50px;top:277.00px;font-family:'Liberation Sans', sans-serif;font-size:12.7px;font-weight:400;line-height:1;-webkit-text-stroke:0.12px currentColor;;color:#000;transform:scaleX(1.0623);transform-origin:0 0">Сергеев Сергей Сергеевич</span>
<span style="position:absolute;white-space:pre;left:56.50px;top:297.00px;font-family:'Liberation Sans', sans-serif;font-size:12.7px;font-weight:400;line-height:1;-webkit-text-stroke:0.12px currentColor;;color:#000;transform:scaleX(1.0852);transform-origin:0 0">Михайлов Михаил Михайлович</span>
<span style="position:absolute;white-space:pre;left:56.50px;top:317.00px;font-family:'Liberation Sans', sans-serif;font-size:12.7px;font-weight:400;line-height:1;-webkit-text-stroke:0.12px currentColor;;color:#000;transform:scaleX(1.0542);transform-origin:0 0">Сидоров Сидор Сидорович</span>
<span style="position:absolute;white-space:pre;left:391.00px;top:257.00px;font-family:'Liberation Sans', sans-serif;font-size:12.7px;font-weight:400;line-height:1;-webkit-text-stroke:0.12px currentColor;;color:#000;transform:scaleX(1.0803);transform-origin:0 0">Фамилия</span>
<span style="position:absolute;white-space:pre;left:525.10px;top:257.00px;font-family:'Liberation Sans', sans-serif;font-size:12.7px;font-weight:400;line-height:1;-webkit-text-stroke:0.12px currentColor;;color:#000;transform:scaleX(1.0802);transform-origin:0 0">Имя</span>
<span style="position:absolute;white-space:pre;left:645.90px;top:257.00px;font-family:'Liberation Sans', sans-serif;font-size:12.7px;font-weight:400;line-height:1;-webkit-text-stroke:0.12px currentColor;;color:#000;transform:scaleX(1.0497);transform-origin:0 0">Отчество</span>
<span style="position:absolute;white-space:pre;left:391.00px;top:277.00px;font-family:'Liberation Sans', sans-serif;font-size:12.7px;font-weight:400;line-height:1;-webkit-text-stroke:0.12px currentColor;;color:#000;transform:scaleX(1.0513);transform-origin:0 0">=ЛЕВСИМВ(А1;поиск())</span>
<div style="position:absolute;left:897px;top:234px;width:15px;height:14px;background:#fff;border:1px solid #b9b9b9;border-right:none;box-sizing:border-box"></div>
<div style="position:absolute;left:897px;top:248px;width:15px;height:1px;background:#a5a5a5"></div>
<div style="position:absolute;left:897px;top:249px;width:15px;height:1px;background:#c9c9c9"></div>
<div style="position:absolute;left:897px;top:250px;width:15px;height:474px;background:#fff;border-left:1px solid #b9b9b9;box-sizing:border-box"></div>
<div style="position:absolute;left:897px;top:724px;width:15px;height:21px;background:#dedede"></div>
<div style="position:absolute;left:897px;top:745px;width:15px;height:14px;background:#fff;border:1px solid #b9b9b9;border-right:none;box-sizing:border-box"></div>
<svg style="position:absolute;left:0;top:0" width="944" height="838"><path d="M900.8 243h7l-3.5-4z M900.8 750h7l-3.5 4z" fill="#666"/></svg>
<div style="position:absolute;left:32px;top:759px;width:880px;height:28px;background:#e6e6e6"></div>
<div style="position:absolute;left:32px;top:759px;width:861px;height:1px;background:#a9a9a9"></div>
<div style="position:absolute;left:128px;top:759px;width:60px;height:25px;background:#fff;border-left:1px solid #b9b9b9;border-right:1px solid #b9b9b9;box-sizing:border-box"></div>
<div style="position:absolute;left:128px;top:782px;width:60px;height:2px;background:#217346"></div>
<span style="position:absolute;white-space:pre;left:139.50px;top:767.00px;font-family:'Liberation Sans', sans-serif;font-size:12.7px;font-weight:700;line-height:1;;color:#217346;transform:scaleX(0.9722);transform-origin:0 0">Лист1</span>
<svg style="position:absolute;left:0;top:0" width="944" height="838">
<path d="M59 768.5v7l-3.5-3.5z M84 768.5v7l3.5-3.5z" fill="#c3c3c3"/>
<circle cx="229" cy="772.5" r="7.3" fill="none" stroke="#666" stroke-width="1.2"/>
<path d="M229 768.3v8.4M224.8 772.5h8.4" stroke="#555" stroke-width="1.7"/>
<g fill="#9a9a9a"><rect x="560" y="768" width="2" height="2"/><rect x="560" y="772" width="2" height="2"/><rect x="560" y="776" width="2" height="2"/></g>
<path d="M587 769v7l-3.5-3.5z M883.5 769v7l3.5-3.5z" fill="#666"/>
</svg>
<div style="position:absolute;left:577px;top:766px;width:15px;height:15px;background:#fff;border:1px solid #b9b9b9;box-sizing:border-box"></div>
<div style="position:absolute;left:591px;top:766px;width:252px;height:15px;background:#fff;border:1px solid #b9b9b9;box-sizing:border-box"></div>
<div style="position:absolute;left:843px;top:766px;width:36px;height:15px;background:#dcdcdc"></div>
<div style="position:absolute;left:879px;top:766px;width:15px;height:15px;background:#fff;border:1px solid #b9b9b9;box-sizing:border-box"></div>
<svg style="position:absolute;left:0;top:0" width="944" height="838">
<path d="M587 769v8l-4.5-4z M884.5 769v8l4.5-4z" fill="#666"/>
</svg>
<span style="position:absolute;white-space:pre;left:36.00px;top:793.00px;font-family:'Liberation Sans', sans-serif;font-size:11.3px;font-weight:400;line-height:1;-webkit-text-stroke:0.12px currentColor;;color:#262626;transform:scaleX(1.0217);transform-origin:0 0">Правка</span>
<svg style="position:absolute;left:0;top:0" width="944" height="838">
<g fill="none" stroke="#777" stroke-width="1">
<path d="M103.5 797v6.5h9.5v-10"/><path d="M104.5 798.5h8M104.5 800.5h8M104.5 802.5h8" stroke-dasharray="1.5 1"/>
<rect x="654.5" y="791.5" width="13" height="12" stroke="#6a6a6a" stroke-width="1.2"/><rect x="657.5" y="794.5" width="7" height="6" stroke="#6a6a6a"/><path d="M659 796.5h4M659 798.5h4" stroke="#6a6a6a"/>
<rect x="694.5" y="791.5" width="13" height="12" stroke="#6a6a6a" stroke-width="1.2"/><path d="M694.5 798.5h10.5v-7M697.5 791.5v7M700.5 791.5v7" stroke="#6a6a6a" stroke-width="1.1"/>
</g><g fill="none" stroke="#9c9c9c" stroke-width="1"><path d="M727 797.5h8M739.5 797.5h100M790.5 795v5M844.5 797.5h8M848.5 793.5v8"/>
<rect x="614.5" y="791.5" width="12" height="12" stroke="#6a6a6a" stroke-width="1.2"/><path d="M614.5 795.5h12M614.5 799.5h12M618.5 791.5v12M622.5 791.5v12" stroke="#6a6a6a" stroke-width="1.1"/>
</g>
<circle cx="103.5" cy="794.5" r="2.8" fill="#666"/><rect x="107" y="792" width="6.5" height="2.5" fill="#666"/>
</svg>
<span style="position:absolute;white-space:pre;left:866.50px;top:793.00px;font-family:'Liberation Sans', sans-serif;font-size:11.5px;font-weight:400;line-height:1;-webkit-text-stroke:0.12px currentColor;;color:#9a9a9a;transform:scaleX(0.8893);transform-origin:0 0">100 %</span>
<div style="position:absolute;left:378px;top:191px;width:65px;height:38px;border:4.2px solid #f00000;border-radius:11px;box-sizing:border-box;box-shadow:1px 2px 4px rgba(0,0,0,0.35), inset 1px 2px 5px rgba(0,0,0,0.3)"></div>
<div style="position:absolute;left:218px;top:366px;width:555px;height:269px;background:#f0f0f0;border:1px solid #8c8c8c;box-sizing:border-box;box-shadow:0 3px 11px rgba(0,0,0,0.2)"></div>
<div style="position:absolute;left:219px;top:367px;width:553px;height:30px;background:#fff"></div>
<span style="position:absolute;white-space:pre;left:227.00px;top:377.00px;font-family:'Liberation Sans', sans-serif;font-size:11.8px;font-weight:400;line-height:1;-webkit-text-stroke:0.12px currentColor;;color:#8a8a8a;transform:scaleX(1.0370);transform-origin:0 0">Аргументы функции</span>
<svg style="position:absolute;left:0;top:0" width="944" height="838">
<path d="M744 376l10 10M754 376l-10 10" stroke="#555" stroke-width="1"/>
</svg>
<span style="position:absolute;white-space:pre;left:700.80px;top:375.00px;font-family:'Liberation Sans', sans-serif;font-size:13.5px;font-weight:400;line-height:1;-webkit-text-stroke:0.12px currentColor;;color:#666;transform:scaleX(0.8782);transform-origin:0 0">?</span>
<div style="position:absolute;left:225px;top:410px;width:540px;height:61px;border:1px solid #dcdcdc;box-sizing:border-box"></div>
<div style="position:absolute;left:229px;top:404px;width:56px;height:12px;background:#f0f0f0"></div>
<span style="position:absolute;white-space:pre;left:231.00px;top:406.00px;font-family:'Liberation Sans', sans-serif;font-size:11px;font-weight:400;line-height:1;-webkit-text-stroke:0.12px currentColor;;color:#000;transform:scaleX(0.9408);transform-origin:0 0">ЛЕВСИМВ</span>
<span style="position:absolute;white-space:pre;left:314.90px;top:429.00px;font-family:'Liberation Sans', sans-serif;font-size:11px;font-weight:700;line-height:1;;color:#000;transform:scaleX(0.9775);transform-origin:0 0">Текст</span>
<span style="position:absolute;white-space:pre;left:238.70px;top:452.00px;font-family:'Liberation Sans', sans-serif;font-size:11px;font-weight:400;line-height:1;-webkit-text-stroke:0.12px currentColor;;color:#000;transform:scaleX(1.0541);transform-origin:0 0">Количество_знаков</span>
<div style="position:absolute;left:352px;top:424px;width:192px;height:20px;background:#fff;border:1px solid #adadad;box-sizing:border-box"></div>
<div style="position:absolute;left:352px;top:447px;width:192px;height:20px;background:#fff;border:1px solid #adadad;box-sizing:border-box"></div>
<div style="position:absolute;left:522px;top:424px;width:22px;height:20px;background:#fff;border:2px solid #b3b3b3;box-shadow:inset 0 0 0 1px #e3e3e3;box-sizing:border-box"></div>
<svg style="position:absolute;left:0;top:0" width="944" height="838">
<path d="M532 429l-4 4h2.6v4h2.8v-4h2.6z" fill="#000"/><rect x="527.5" y="438" width="9" height="1.2" fill="#000"/></svg>
<div style="position:absolute;left:522px;top:447px;width:22px;height:20px;background:#fff;border:2px solid #b3b3b3;box-shadow:inset 0 0 0 1px #e3e3e3;box-sizing:border-box"></div>
<svg style="position:absolute;left:0;top:0" width="944" height="838">
<path d="M532 452l-4 4h2.6v4h2.8v-4h2.6z" fill="#000"/><rect x="527.5" y="461" width="9" height="1.2" fill="#000"/></svg>
<span style="position:absolute;white-space:pre;left:355.60px;top:429.00px;font-family:'Liberation Sans', sans-serif;font-size:11px;font-weight:400;line-height:1;-webkit-text-stroke:0.12px currentColor;;color:#000;transform:scaleX(0.9429);transform-origin:0 0">A1</span>
<span style="position:absolute;white-space:pre;left:356.20px;top:452.00px;font-family:'Liberation Sans', sans-serif;font-size:11px;font-weight:400;line-height:1;-webkit-text-stroke:0.12px currentColor;;color:#000;transform:scaleX(1.0625);transform-origin:0 0">поиск()</span>
<span style="position:absolute;white-space:pre;left:553.00px;top:429.00px;font-family:'Liberation Sans', sans-serif;font-size:11px;font-weight:400;line-height:1;-webkit-text-stroke:0.12px currentColor;;color:#000;transform:scaleX(1.1495);transform-origin:0 0">=</span>
<span style="position:absolute;white-space:pre;left:553.00px;top:452.00px;font-family:'Liberation Sans', sans-serif;font-size:11px;font-weight:400;line-height:1;-webkit-text-stroke:0.12px currentColor;;color:#000;transform:scaleX(1.1495);transform-origin:0 0">=</span>
<span style="position:absolute;white-space:pre;left:553.00px;top:479.00px;font-family:'Liberation Sans', sans-serif;font-size:11px;font-weight:400;line-height:1;-webkit-text-stroke:0.12px currentColor;;color:#000;transform:scaleX(1.1495);transform-origin:0 0">=</span>
<span style="position:absolute;white-space:pre;left:569.90px;top:429.00px;font-family:'Liberation Sans', sans-serif;font-size:11px;font-weight:400;line-height:1;-webkit-text-stroke:0.12px currentColor;;color:#000;transform:scaleX(1.0661);transform-origin:0 0">"Иванов Иван Иванович"</span>
<span style="position:absolute;white-space:pre;left:224.80px;top:495.00px;font-family:'Liberation Sans', sans-serif;font-size:11px;font-weight:400;line-height:1;-webkit-text-stroke:0.12px currentColor;;color:#000;transform:scaleX(1.0456);transform-origin:0 0">Возвращает указанное количество знаков с начала строки текста.</span>
<span style="position:absolute;white-space:pre;left:317.00px;top:519.00px;font-family:'Liberation Sans', sans-serif;font-size:11px;font-weight:700;line-height:1;;color:#000;transform:scaleX(0.9887);transform-origin:0 0">Количество_знаков</span>
<span style="position:absolute;white-space:pre;left:431.50px;top:519.00px;font-family:'Liberation Sans', sans-serif;font-size:11px;font-weight:400;line-height:1;-webkit-text-stroke:0.12px currentColor;;color:#000;transform:scaleX(1.0678);transform-origin:0 0">количество знаков, которое нужно извлечь; если не указано,</span>
<span style="position:absolute;white-space:pre;left:431.50px;top:532.00px;font-family:'Liberation Sans', sans-serif;font-size:11px;font-weight:400;line-height:1;-webkit-text-stroke:0.12px currentColor;;color:#000;transform:scaleX(1.0565);transform-origin:0 0">принимается равным 1.</span>
<div style="position:absolute;left:225px;top:567px;width:541px;height:1px;background:#d9d9d9"></div>
<span style="position:absolute;white-space:pre;left:224.60px;top:582.00px;font-family:'Liberation Sans', sans-serif;font-size:11px;font-weight:400;line-height:1;-webkit-text-stroke:0.12px currentColor;;color:#000;transform:scaleX(1.0647);transform-origin:0 0">Значение:</span>
<span style="position:absolute;white-space:pre;left:224.60px;top:611.00px;font-family:'Liberation Sans', sans-serif;font-size:11px;font-weight:400;line-height:1;-webkit-text-stroke:0.12px currentColor;;color:#1a6fc9;transform:scaleX(1.0760);transform-origin:0 0">Справка по этой функции</span>
<div style="position:absolute;left:225px;top:621px;width:140px;height:1px;background:#1a6fc9"></div>
<div style="position:absolute;left:607px;top:604px;width:74px;height:22px;background:#e1e1e1;border:2px solid #0078d7;box-sizing:border-box"></div>
<div style="position:absolute;left:691px;top:604px;width:74px;height:22px;background:#e1e1e1;border:1px solid #adadad;box-sizing:border-box"></div>
<span style="position:absolute;white-space:pre;left:636.10px;top:610.00px;font-family:'Liberation Sans', sans-serif;font-size:11px;font-weight:400;line-height:1;-webkit-text-stroke:0.12px currentColor;;color:#000;transform:scaleX(0.9745);transform-origin:0 0">OK</span>
<span style="position:absolute;white-space:pre;left:707.20px;top:610.00px;font-family:'Liberation Sans', sans-serif;font-size:11px;font-weight:400;line-height:1;-webkit-text-stroke:0.12px currentColor;;color:#000;transform:scaleX(1.0312);transform-origin:0 0">Отмена</span>
</body></html>
